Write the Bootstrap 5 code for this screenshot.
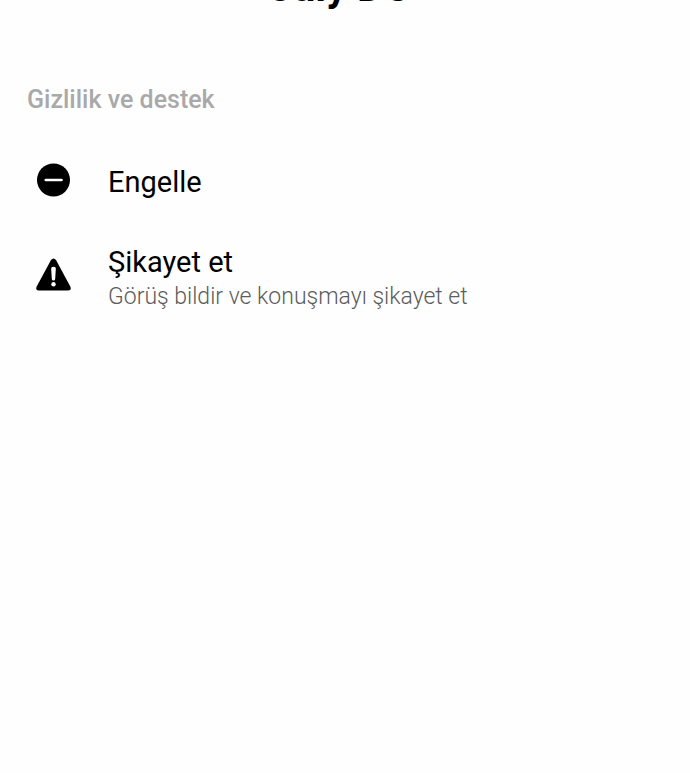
<!DOCTYPE html>
<html lang="tr">
<head>
<meta charset="utf-8">
<meta name="viewport" content="width=device-width, initial-scale=1">
<title>Gizlilik ve destek</title>
<link href="https://cdn.jsdelivr.net/npm/bootstrap@5.3.0/dist/css/bootstrap.min.css" rel="stylesheet">
<style>
body { font-family: Roboto, sans-serif; background: #fefefe; color: #000; }
.profile-head { height: 11px; padding-right: 10px; }
.profile-name { font-size: 41px; line-height: 48px; font-weight: 700; }
.settings { padding: 73px 28px 0 27px; }
.section-title { font-size: 25px; line-height: 32px; font-weight: 500; color: #a9a9a9; }
.option { gap: 28px; color: #000; }
.option-block { margin-top: 48px; }
.option-report { margin-top: 44px; }
.option-icon { width: 53px; height: 36px; overflow: visible; }
.option-label { font-size: 29px; line-height: 36px; }
.option-note { font-size: 23px; line-height: 34px; font-weight: 300; color: #5c5c5c; }
</style>
</head>
<body>
<header class="profile-head d-flex align-items-end justify-content-center overflow-hidden">
  <h1 class="profile-name m-0">July DC</h1>
</header>
<main class="settings">
  <h2 class="section-title m-0">Gizlilik ve destek</h2>
  <button type="button" class="option option-block btn border-0 p-0 w-100 d-flex align-items-center text-start">
    <svg class="option-icon flex-shrink-0" viewBox="0 0 53 36" aria-hidden="true"><circle cx="26.500" cy="16" r="16.500"/><path d="M18.800 16H34.500" stroke="#fff" stroke-width="2.700" stroke-linecap="round"/></svg>
    <span class="option-label">Engelle</span>
  </button>
  <button type="button" class="option option-report btn border-0 p-0 w-100 d-flex align-items-center text-start">
    <svg class="option-icon flex-shrink-0" viewBox="0 0 53 36" aria-hidden="true"><path d="M24-1Q26.500-4 29-1L43.300 25.500Q45 29.500 41 29.500H12Q8 29.500 9.700 25.500Z"/><path d="M26.500 5.800Q29 5.800 28.800 8L28.200 18Q28 19.500 26.500 19.500T24.800 18L24.200 8Q24 5.800 26.500 5.800Z" fill="#fff"/><circle cx="26.500" cy="23.300" r="2.200" fill="#fff"/></svg>
    <span><span class="option-label d-block">Şikayet et</span><span class="option-note d-block">Görüş bildir ve konuşmayı şikayet et</span></span>
  </button>
</main>
<script src="https://cdn.jsdelivr.net/npm/bootstrap@5.3.0/dist/js/bootstrap.bundle.min.js"></script>
</body>
</html>
